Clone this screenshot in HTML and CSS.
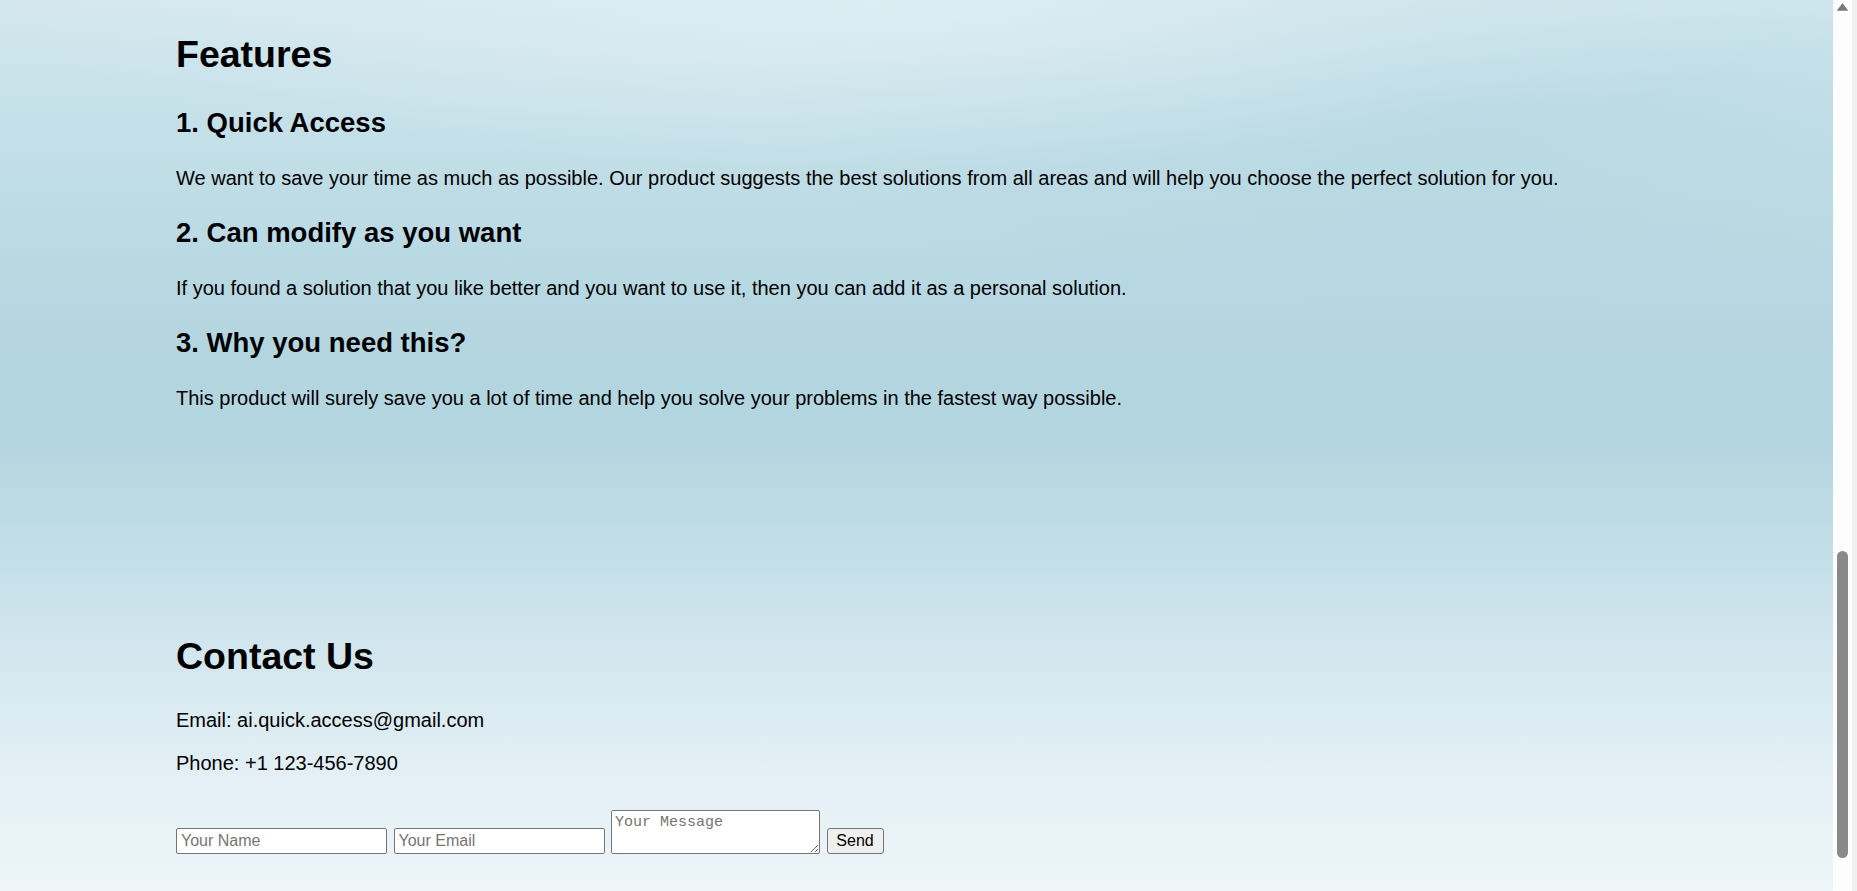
FILE: index.html
```html
<!DOCTYPE html>
<html lang="en">
<head>
<meta charset="utf-8">
<title>AI Quick Access</title>
<link rel="stylesheet" href="styles.css">
</head>
<body>
<div class="screen">
  <main class="content">
    <section class="features">
      <h2>Features</h2>
      <h3>1. Quick Access</h3>
      <p>We want to save your time as much as possible. Our product suggests the best solutions from all areas and will help you choose the perfect solution for you.</p>
      <h3>2. Can modify as you want</h3>
      <p>If you found a solution that you like better and you want to use it, then you can add it as a personal solution.</p>
      <h3>3. Why you need this?</h3>
      <p>This product will surely save you a lot of time and help you solve your problems in the fastest way possible.</p>
    </section>

    <section class="contact">
      <h2>Contact Us</h2>
      <p>Email: ai.quick.access@gmail.com</p>
      <p>Phone: +1 123-456-7890</p>
      <form class="contact-form">
        <input class="field" type="text" placeholder="Your Name">
        <input class="field" type="email" placeholder="Your Email">
        <textarea class="message" placeholder="Your Message"></textarea>
        <button class="send" type="submit">Send</button>
      </form>
    </section>
  </main>

  <div class="scrollbar" aria-hidden="true">
    <div class="sb-button sb-up">
      <svg width="24" height="17" viewBox="0 0 24 17"><path d="M3.8 10.8 L9.5 3 L15.2 10.8 Z" fill="#787878"/></svg>
    </div>
    <div class="sb-track">
      <div class="sb-thumb"></div>
    </div>
    <div class="sb-button sb-down"></div>
  </div>
</div>
</body>
</html>
```

FILE: styles.css
```css
html, body {
  margin: 0;
  padding: 0;
  height: 100%;
  overflow: hidden;
}

body {
  font-family: "Liberation Sans", Arial, sans-serif;
  color: #000;
}

.screen {
  display: flex;
  height: 100vh;
}

.content {
  flex: 1;
  min-width: 0;
  overflow: hidden;
  padding-top: 2px;
  background:
    radial-gradient(ellipse 900px 160px at 900px 10px, rgba(225, 240, 245, 0.7), rgba(225, 240, 245, 0) 100%),
    radial-gradient(ellipse 700px 220px at 1450px 110px, rgba(170, 208, 220, 0.45), rgba(170, 208, 220, 0) 100%),
    linear-gradient(180deg,
      #d3e8ee 0%,
      #c9e2ea 9%,
      #bcdbe4 25%,
      #b3d5df 40%,
      #b4d6e0 50%,
      #c3dee7 62%,
      #d2e6ee 73%,
      #e2eff5 86%,
      #edf5f9 100%);
}

/* Browser scrollbar as seen in the screenshot */
.scrollbar {
  width: 24px;
  flex-shrink: 0;
  display: flex;
  flex-direction: column;
  background: linear-gradient(to right, #fdfdfd 19px, #f0f0f0 19px);
}

.sb-button svg {
  display: block;
}

.sb-up {
  height: 17px;
}

.sb-down {
  height: 33px;
}

.sb-track {
  flex: 1;
  display: flex;
  flex-direction: column;
  justify-content: flex-end;
  padding-left: 4px;
}

.sb-thumb {
  width: 11px;
  height: 307px;
  border-radius: 5.5px;
  background: #898989;
}

.features,
.contact {
  display: flow-root;
  padding-left: 176px;
  padding-right: 176px;
}

.features {
  padding-bottom: 87px;
}

.contact {
  padding-top: 87px;
}

h2 {
  font-size: 37.5px;
  line-height: 43px;
  font-weight: bold;
  margin: 31px 0;
}

h3 {
  font-size: 27.5px;
  line-height: 32px;
  font-weight: bold;
  margin: 27.5px 0;
}

p {
  font-size: 20px;
  line-height: 23px;
  margin: 20px 0;
}

.contact-form {
  margin: 35px 0 0;
  display: flex;
  align-items: flex-end;
  gap: 6.5px;
}

.field {
  box-sizing: border-box;
  width: 211px;
  height: 26px;
  margin: 0;
  padding: 0 4px;
  border: 1px solid #767676;
  border-radius: 2px;
  background: #fff;
  font-family: "Liberation Sans", Arial, sans-serif;
  font-size: 16px;
  color: #000;
}

.message {
  box-sizing: border-box;
  width: 209px;
  height: 44px;
  margin: 0;
  padding: 3px 3px;
  border: 1px solid #767676;
  border-radius: 2px;
  background: #fff;
  font-family: "Liberation Mono", "DejaVu Sans Mono", monospace;
  font-size: 15px;
  line-height: 17px;
  color: #000;
}

.field::placeholder,
.message::placeholder {
  color: #757575;
}

.send {
  box-sizing: border-box;
  width: 57px;
  height: 26px;
  margin: 0;
  padding: 0;
  border: 1px solid #767676;
  border-radius: 3px;
  background: #efefef;
  font-family: "Liberation Sans", Arial, sans-serif;
  font-size: 16px;
  color: #000;
}
```
